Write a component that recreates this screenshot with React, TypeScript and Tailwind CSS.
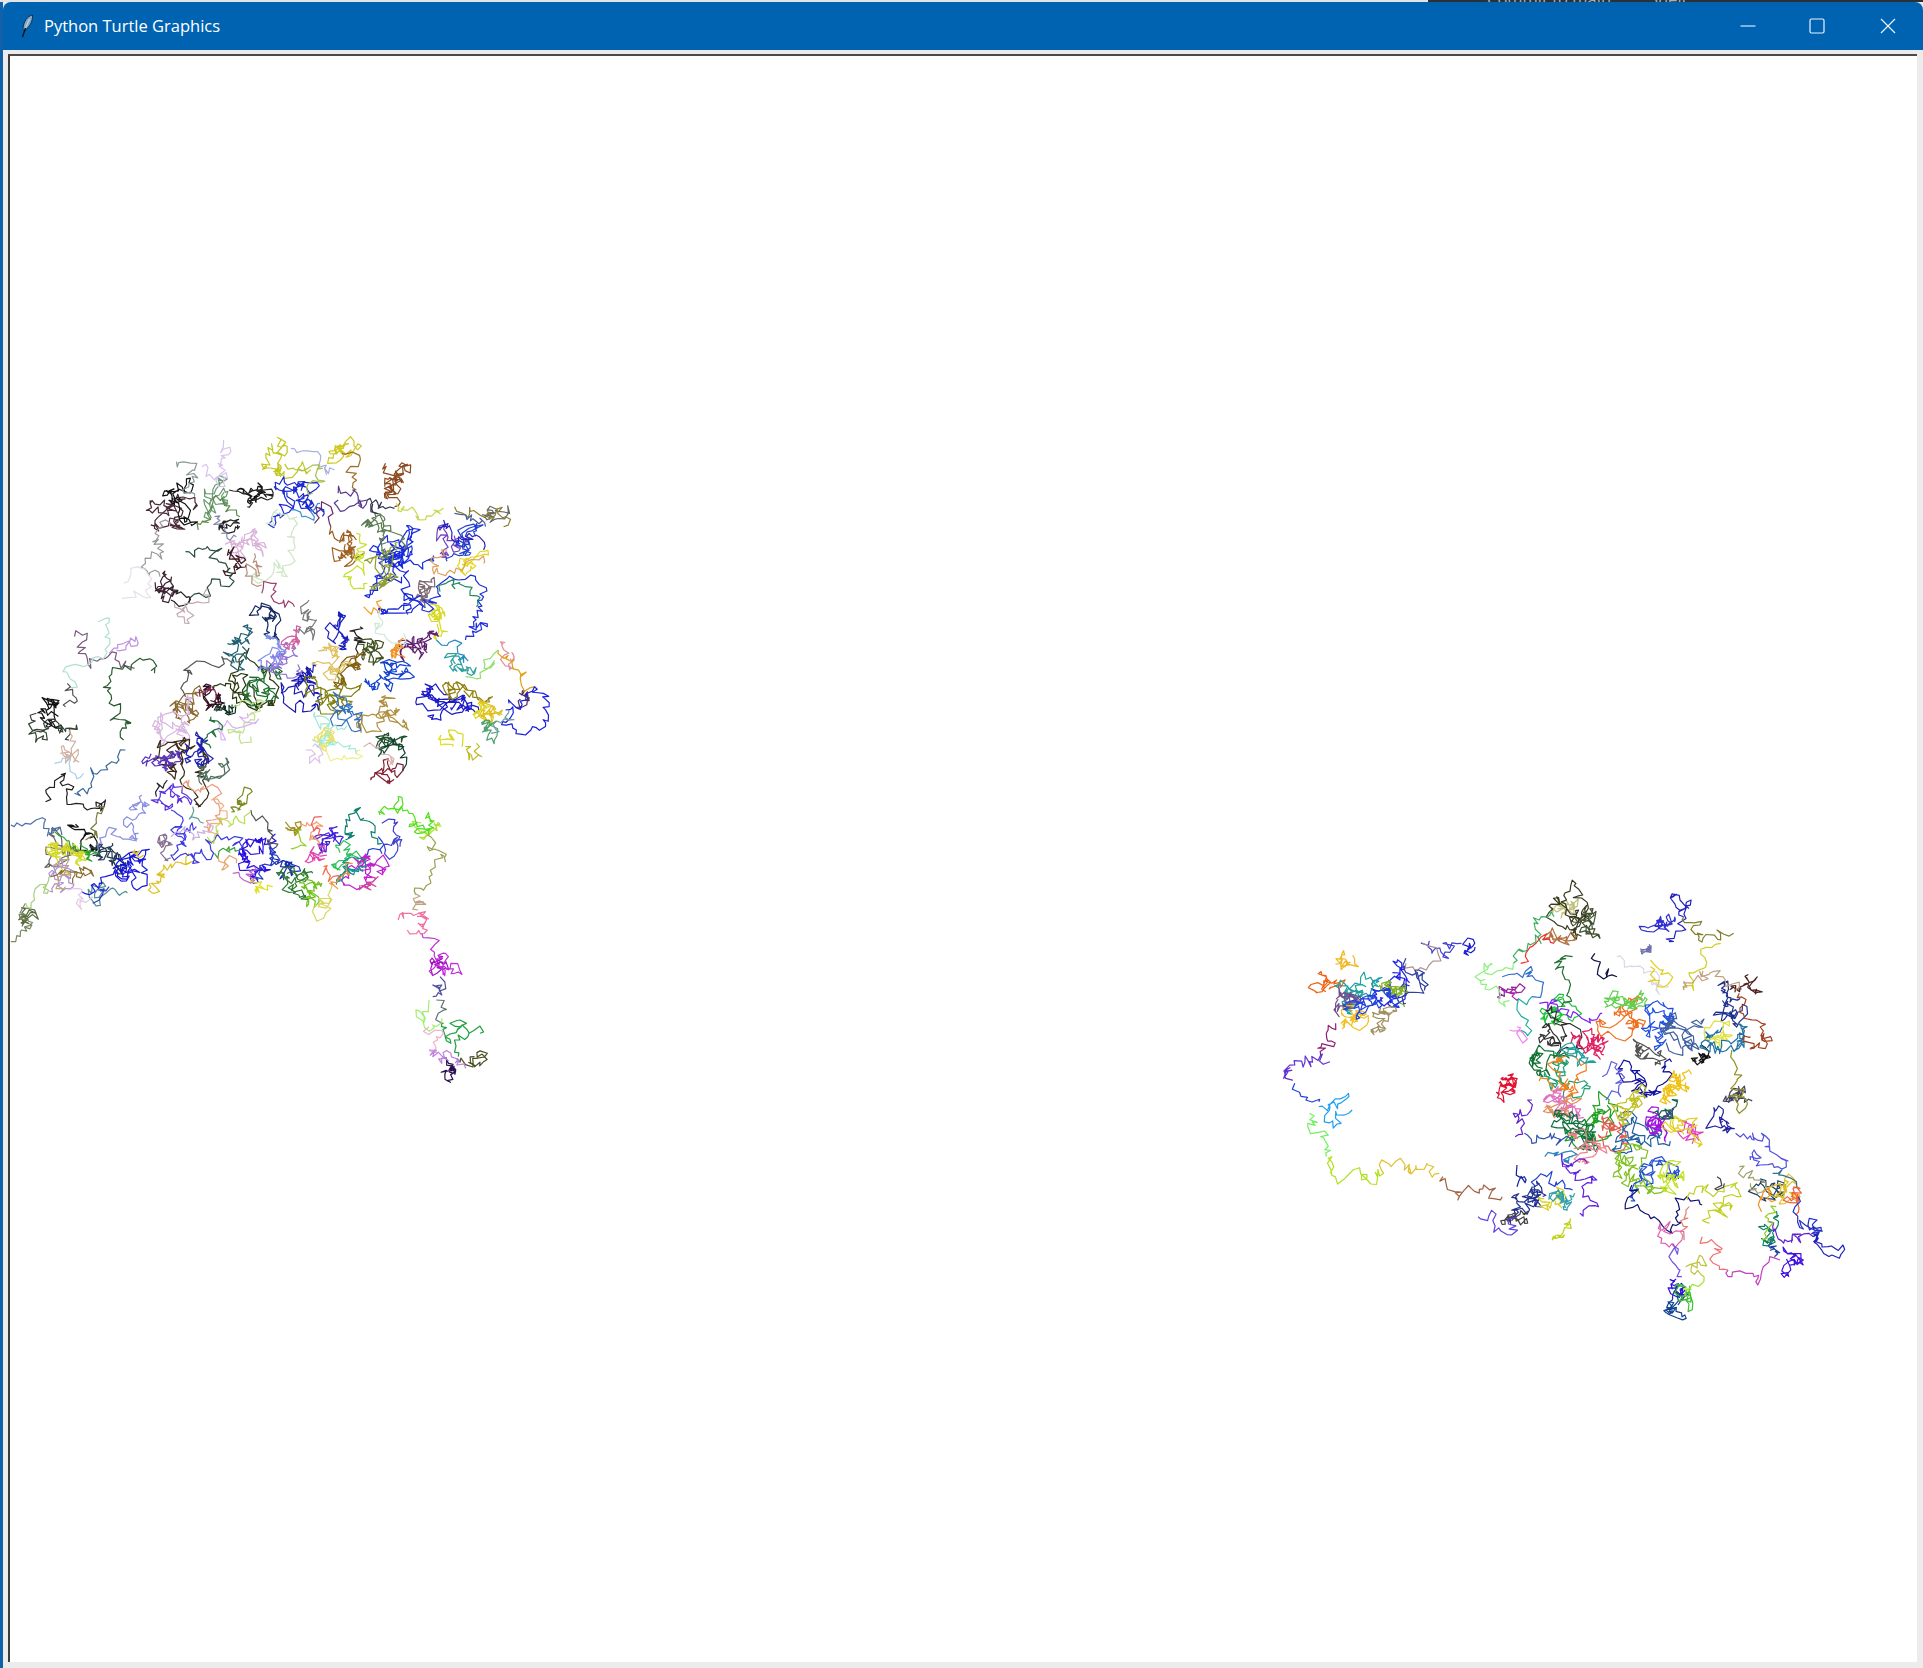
import { useMemo } from 'react';

type Trail = [string, ...number[]];
type Tangle = [string, number, number, number];

interface Group {
  ox: number;
  oy: number;
  sx: number;
  trails: Trail[];
  tangles: Tangle[];
}

// traced off the zoomed crops, relative to each group's origin
const groups: Group[] = [
  {
    ox: 0,
    oy: 420,
    sx: 2.75,
    trails: [
      ['#d9c3ee', 615, 60, 635, 95, 600, 130, 625, 175, 590, 180, 555, 140],
      ['#8a9a9a', 485, 125, 530, 150, 520, 190, 535, 230],
      ['#222222', 630, 210, 690, 205, 735, 240, 680, 260],
      ['#5d8a4a', 545, 330, 570, 280, 610, 235, 650, 270, 660, 290],
      ['#8888aa', 590, 290, 610, 340, 650, 350],
      ['#cfe6c8', 730, 310, 770, 290, 810, 320, 800, 350, 790, 470, 760, 420, 720, 460],
      ['#b89080', 700, 400, 720, 440, 680, 460, 720, 495],
      ['#999999', 470, 310, 420, 365, 440, 400, 400, 430, 440, 470],
      ['#2b4b40', 510, 395, 570, 380, 610, 385, 640, 460, 630, 500, 580, 490, 520, 550],
      ['#222222', 470, 510, 520, 530, 510, 555, 470, 540],
      ['#c0aab0', 480, 550, 510, 560, 490, 590, 520, 610, 530, 550, 570, 510],
      ['#e6e0ea', 335, 535, 400, 510, 380, 440, 340, 490],
      ['#aab0e0', 800, 85, 860, 95, 920, 150],
      ['#a8c050', 820, 145, 890, 185, 860, 220],
      ['#3a90d0', 800, 270, 830, 290, 880, 250],
      ['#a07030', 940, 100, 980, 160, 980, 210],
      ['#6a2a70', 865, 310, 910, 260, 910, 320],
      ['#9a5a20', 910, 320, 920, 355, 980, 360],
      ['#8a4a20', 1060, 130, 1110, 160, 1085, 260],
      ['#5a3a90', 930, 220, 970, 210, 1010, 240, 960, 260, 930, 240],
      ['#333355', 1010, 240, 1040, 265, 1085, 265],
      ['#c8d850', 1090, 250, 1150, 300, 1220, 265],
      ['#8a8030', 1250, 260, 1340, 275, 1390, 290, 1385, 320],
      ['#4a5a9a', 1250, 280, 1320, 295, 1335, 320],
      ['#2a20c0', 1220, 300, 1210, 330, 1290, 340, 1330, 390],
      ['#c8e030', 980, 340, 1000, 430, 945, 470, 1010, 490],
      ['#f0a020', 1000, 560, 1050, 540],
      ['#e0a060', 1230, 390, 1190, 450, 1250, 460, 1330, 430],
      ['#2030d8', 1110, 570, 1160, 570, 1200, 500, 1260, 480, 1330, 530, 1290, 620, 1340, 620, 1280, 660],
      ['#208a60', 1210, 515, 1260, 490, 1310, 560],
      ['#cfe8d8', 1040, 570, 1030, 610, 1110, 640],
      ['#a04070', 720, 520, 760, 490, 780, 540, 810, 560],
      ['#777777', 850, 540, 870, 600, 850, 620, 860, 660, 820, 640],
      ['#222222', 990, 620, 985, 700],
      ['#2a8ac0', 1200, 660, 1270, 670, 1260, 720],
      ['#e0a010', 1370, 690, 1410, 720, 1470, 800],
      ['#90e070', 1280, 770, 1330, 720, 1370, 690],
      ['#1a20e0', 1400, 850, 1470, 800, 1510, 860, 1460, 930, 1420, 930, 1390, 870],
      ['#70a0a0', 1350, 940, 1400, 870],
      ['#d8d820', 1210, 960, 1260, 940, 1270, 980],
      ['#555555', 640, 730, 610, 710, 505, 790, 510, 830],
      ['#802050', 550, 830, 580, 800, 590, 840],
      ['#c0e090', 640, 860, 720, 840, 700, 900, 630, 940, 690, 950],
      ['#d8b0f0', 600, 910, 620, 960, 680, 880],
      ['#207040', 580, 890, 570, 950, 580, 985],
      ['#7a5a7a', 205, 650, 240, 640, 215, 700, 250, 745, 290, 715, 370, 745],
      ['#c090e0', 300, 700, 340, 670, 380, 670, 320, 690],
      ['#b0e0d0', 270, 605, 300, 640, 270, 710, 230, 740, 190, 800],
      ['#555555', 185, 790, 205, 850, 180, 860],
      ['#334433', 100, 880, 100, 950, 130, 960, 120, 910, 210, 915, 190, 960],
      ['#2a5a30', 425, 760, 385, 715, 360, 750, 300, 770, 300, 850, 330, 880, 340, 960],
    ],
    tangles: [
      ['#4a2a38', 465, 265, 48],
      ['#111111', 490, 245, 32],
      ['#111111', 710, 225, 20],
      ['#222222', 640, 310, 24],
      ['#d8b0d8', 660, 370, 42],
      ['#3a1a20', 650, 425, 28],
      ['#3a2030', 450, 505, 32],
      ['#6a9a70', 600, 245, 18],
      ['#c0c820', 775, 125, 32],
      ['#d0c820', 940, 75, 26],
      ['#1a2ad0', 825, 220, 52],
      ['#a06020', 955, 390, 28],
      ['#8a4a20', 1085, 185, 32],
      ['#7040c0', 1240, 360, 30],
      ['#666666', 1345, 280, 12],
      ['#1a30e0', 1080, 420, 62],
      ['#5a7a50', 1070, 370, 42],
      ['#1525d8', 1080, 500, 52],
      ['#90a030', 1060, 450, 34],
      ['#2040d0', 1290, 370, 30],
      ['#e0d820', 1300, 425, 20],
      ['#d8d820', 1215, 605, 24],
      ['#7a6a70', 1170, 530, 24],
      ['#152a60', 745, 600, 30],
      ['#1a20c0', 945, 610, 30],
      ['#2a3a10', 700, 800, 52],
      ['#207030', 730, 800, 40],
      ['#1a1ab0', 850, 810, 48],
      ['#808010', 920, 800, 38],
      ['#806010', 980, 760, 24],
      ['#1040d0', 1060, 770, 44],
      ['#405020', 1030, 700, 24],
      ['#e0c060', 940, 720, 38],
      ['#9070d0', 790, 720, 44],
      ['#8090f0', 750, 700, 30],
      ['#206070', 660, 690, 34],
      ['#d060a0', 810, 670, 26],
      ['#602070', 1150, 680, 34],
      ['#f09020', 1100, 690, 24],
      ['#30a0a0', 1260, 740, 20],
      ['#1a1ac8', 1230, 860, 56],
      ['#908010', 1270, 820, 20],
      ['#e0d820', 1330, 870, 20],
      ['#b09040', 1050, 900, 36],
      ['#205030', 1060, 960, 28],
      ['#3070c0', 930, 880, 34],
      ['#a0e8d8', 880, 950, 30],
      ['#f0e060', 880, 960, 26],
      ['#8a6a30', 510, 860, 28],
      ['#301020', 590, 850, 22],
      ['#103020', 620, 865, 18],
      ['#d8b8e0', 470, 930, 46],
      ['#111111', 140, 875, 28],
      ['#e090a0', 1400, 720, 14],
      ['#503060', 1440, 830, 18],
      ['#e0c020', 1330, 870, 22],
      ['#50a070', 1345, 945, 18],
    ],
  },
  {
    ox: 0,
    oy: 740,
    sx: 2.75,
    trails: [
      ['#4a70a8', 30, 255, 70, 250, 120, 265, 170, 285],
      ['#7a8a60', 30, 605, 60, 570, 75, 540, 70, 490],
      ['#a8d080', 70, 490, 95, 480, 130, 460, 135, 410],
      ['#222222', 125, 185, 180, 100, 185, 160, 210, 190, 240, 210, 265, 205, 290, 180, 265, 200],
      ['#7a7a40', 265, 200, 265, 250, 235, 300],
      ['#3a6a9a', 205, 160, 250, 130, 280, 90, 320, 70, 345, 30],
      ['#a8d0e8', 150, 70, 190, 70, 230, 100],
      ['#8a7030', 140, 410, 210, 410, 250, 390, 200, 430],
      ['#c0a870', 140, 380, 180, 390, 180, 440],
      ['#1a1ae0', 225, 455, 280, 430, 340, 400, 395, 355, 405, 410, 390, 440, 350, 400],
      ['#3030d0', 255, 490, 270, 450, 300, 440],
      ['#e6c8e6', 185, 450, 210, 490, 250, 470],
      ['#8a90e0', 270, 330, 330, 290, 380, 280, 340, 240, 400, 220, 410, 195, 360, 210, 390, 165],
      ['#e0c020', 365, 340, 395, 345],
      ['#e0c020', 410, 430, 425, 460, 415, 430, 450, 375, 500, 370, 520, 340],
      ['#222222', 430, 170, 460, 120],
      ['#e8a080', 500, 150, 560, 140, 600, 190, 560, 260],
      ['#60a090', 530, 200, 560, 250],
      ['#f0b080', 580, 180, 610, 190, 600, 270],
      ['#4040e0', 470, 210, 470, 270, 540, 260],
      ['#3a3ae0', 480, 260, 490, 330, 470, 345, 510, 340, 530, 370, 550, 340, 580, 330, 590, 300, 660, 330],
      ['#c8b0e0', 470, 290, 530, 300, 570, 260],
      ['#555555', 690, 210, 730, 240, 735, 300, 760, 320],
      ['#b8e050', 690, 215, 670, 250, 620, 240, 600, 280, 570, 290],
      ['#40a040', 590, 340, 630, 320, 660, 330],
      ['#e8a060', 600, 350, 610, 390, 650, 370],
      ['#c060d0', 640, 400, 670, 420, 700, 380],
      ['#2a40c0', 710, 420, 770, 360, 760, 320],
      ['#2a7a30', 780, 400, 830, 420, 860, 400],
      ['#e0e020', 695, 415, 705, 460, 750, 440],
      ['#d8d860', 880, 480, 910, 475, 895, 520, 875, 500, 905, 460, 910, 430],
      ['#f0a070', 830, 260, 870, 245, 880, 310, 855, 290],
      ['#90d020', 830, 270, 820, 320, 800, 325],
      ['#f06060', 885, 230, 885, 290],
      ['#108070', 950, 300, 955, 260, 1000, 235, 1020, 275, 1050, 310],
      ['#2040d8', 1040, 290, 1050, 340, 1010, 345],
      ['#d040a0', 990, 435, 1020, 450, 1020, 410],
      ['#f09040', 905, 430, 950, 400, 970, 370],
      ['#f07050', 890, 380, 930, 420],
      ['#4040d0', 1050, 250, 1100, 290, 1060, 330, 1100, 320],
      ['#50e020', 1045, 225, 1095, 170, 1120, 210, 1125, 260, 1180, 285, 1150, 265, 1170, 235, 1190, 245],
      ['#9aa050', 1175, 285, 1175, 320, 1195, 360, 1180, 410, 1145, 465],
      ['#c0a080', 1140, 460, 1150, 510],
      ['#f070a0', 1095, 540, 1130, 520, 1170, 515, 1150, 550, 1175, 570, 1120, 570],
      ['#c030d8', 1160, 580, 1225, 640, 1240, 670, 1250, 700, 1210, 680, 1190, 705],
      ['#5050a0', 1210, 710, 1190, 735, 1215, 735, 1215, 765, 1190, 770],
      ['#607070', 1200, 780, 1205, 820, 1220, 850],
      ['#a0f070', 1180, 780, 1145, 830, 1190, 855, 1215, 835],
      ['#20a040', 1215, 850, 1240, 910, 1265, 840, 1290, 880, 1250, 900, 1260, 950],
      ['#20a040', 1290, 880, 1320, 880],
      ['#4a5020', 1255, 955, 1300, 955, 1340, 940, 1330, 965, 1305, 950],
      ['#f0b0d0', 1180, 860, 1200, 890, 1180, 930],
      ['#c080e0', 1180, 930, 1215, 970, 1240, 940, 1280, 985],
      ['#e0c0e8', 840, 30, 880, 70, 860, 20],
      ['#f0f080', 890, 10, 940, 60, 990, 30],
      ['#a0e8d8', 920, 10, 980, 40],
      ['#e0b0b0', 1000, 20, 1060, 60],
      ['#104030', 1040, 50, 1110, 30, 1110, 90],
      ['#e0e020', 1205, 0, 1245, 20],
      ['#c0b820', 1280, 20, 1290, 60, 1325, 50, 1310, 10],
    ],
    tangles: [
      ['#5a6a40', 70, 550, 12],
      ['#d0b0a0', 175, 35, 22],
      ['#111111', 230, 290, 26],
      ['#666666', 170, 320, 28],
      ['#223a50', 300, 370, 36],
      ['#d4d820', 190, 340, 30],
      ['#d4d820', 190, 340, 22],
      ['#1515d0', 345, 385, 30],
      ['#30a030', 230, 320, 18],
      ['#b090d0', 155, 425, 18],
      ['#509090', 290, 445, 12],
      ['#3a2a15', 510, 80, 50],
      ['#2020b0', 540, 30, 36],
      ['#5a30c0', 455, 70, 32],
      ['#507060', 570, 90, 24],
      ['#5a30e0', 460, 185, 22],
      ['#8a7090', 470, 300, 22],
      ['#7a8a20', 675, 180, 16],
      ['#2a10e0', 690, 345, 38],
      ['#1a30b0', 770, 385, 24],
      ['#2a7a30', 810, 420, 22],
      ['#70c020', 850, 465, 18],
      ['#a09020', 795, 255, 14],
      ['#4020e0', 915, 285, 28],
      ['#e040b0', 880, 340, 24],
      ['#30c060', 950, 330, 24],
      ['#c020d0', 1010, 380, 32],
      ['#109090', 970, 400, 22],
      ['#a010c0', 1210, 680, 18],
      ['#2a1050', 1240, 995, 20],
      ['#802030', 1075, 100, 26],
      ['#b0e040', 1165, 265, 14],
    ],
  },
  {
    ox: 1280,
    oy: 880,
    sx: 2.7,
    trails: [
      ['#4040d0', 490, 190, 440, 190, 455, 235, 410, 220, 385, 190],
      ['#b09090', 385, 190, 395, 270, 340, 250],
      ['#3040a0', 340, 235, 390, 330, 365, 270, 340, 370],
      ['#902070', 150, 430, 125, 460, 145, 500, 110, 525],
      ['#6030d0', 135, 545, 110, 525, 80, 545, 40, 555, 35, 600],
      ['#2040e0', 40, 610, 70, 660, 105, 665],
      ['#20a0f0', 105, 680, 185, 640, 135, 680, 165, 730, 195, 690],
      ['#70f060', 80, 700, 75, 740, 130, 800, 125, 830],
      ['#b0e020', 135, 880, 130, 835, 220, 900, 280, 880],
      ['#e0c030', 280, 880, 300, 860, 350, 880, 400, 855, 430, 880],
      ['#a06040', 440, 890, 480, 960, 550, 915, 600, 950],
      ['#6040e0', 535, 1010, 580, 1010, 625, 1065, 640, 1010],
      ['#1020a0', 640, 855, 660, 890, 640, 920],
      ['#2040d0', 690, 920, 720, 890, 790, 930],
      ['#6020e0', 810, 1000, 860, 980, 820, 930, 855, 900, 760, 820, 830, 850],
      ['#3080c0', 715, 830, 740, 820, 780, 850, 790, 830],
      ['#40b060', 740, 110, 700, 120, 670, 190, 630, 250],
      ['#90f080', 630, 250, 570, 250, 565, 330, 620, 360],
      ['#f03030', 650, 250, 680, 200, 740, 190],
      ['#3070d0', 600, 290, 640, 280, 690, 300, 680, 350],
      ['#20b0a0', 680, 350, 640, 390, 650, 450],
      ['#f080f0', 620, 450, 650, 480, 640, 440],
      ['#207030', 790, 230, 780, 300, 760, 380],
      ['#8020f0', 700, 370, 750, 380, 800, 400, 870, 400],
      ['#a04020', 1240, 340, 1300, 430, 1325, 470, 1305, 505, 1270, 470],
      ['#101040', 850, 220, 880, 280, 910, 290],
      ['#d8d8e8', 910, 230, 950, 260, 1000, 300, 1050, 320],
      ['#e0d020', 1000, 240, 1050, 280, 1020, 320, 1000, 260],
      ['#2020c0', 1050, 185, 1080, 60, 1110, 60, 1090, 110],
      ['#808030', 1090, 110, 1130, 180, 1190, 180, 1180, 150, 1225, 160],
      ['#d0d020', 1190, 190, 1130, 270, 1090, 330],
      ['#c0a080', 1090, 330, 1160, 280, 1230, 330],
      ['#909020', 1220, 510, 1235, 600, 1250, 640, 1240, 700, 1210, 650],
      ['#5050e0', 1230, 760, 1280, 780, 1300, 760, 1310, 800, 1345, 860, 1280, 810, 1270, 840],
      ['#6060e0', 870, 590, 910, 570, 920, 650, 880, 660],
      ['#6020d0', 680, 660, 630, 700, 660, 730, 635, 770],
      ['#3050b0', 660, 760, 680, 790, 730, 760, 780, 800],
      ['#101070', 950, 915, 985, 1000, 1075, 1005, 1090, 960, 1140, 975],
      ['#c0d020', 1100, 960, 1170, 950, 1200, 920, 1240, 940, 1215, 990, 1170, 970, 1160, 1030],
      ['#404040', 1180, 890, 1180, 930, 1200, 910],
      ['#e08070', 1105, 980, 1100, 1040, 1085, 1080],
      ['#e060b0', 1085, 1080, 1040, 1090, 1040, 1040, 1090, 1080],
      ['#7050e0', 1060, 1090, 1050, 1130, 1080, 1170, 1085, 1190],
      ['#f07070', 1140, 1070, 1190, 1110, 1170, 1150, 1210, 1170],
      ['#c040c0', 1210, 1170, 1220, 1190, 1280, 1190, 1290, 1215, 1305, 1160, 1350, 1140],
      ['#c0c040', 1095, 1160, 1140, 1130, 1110, 1165, 1145, 1190],
      ['#a0e030', 1145, 1190, 1100, 1250],
      ['#6020d0', 1320, 1025, 1400, 1080, 1440, 1070],
      ['#2020c0', 1440, 1070, 1490, 1125, 1520, 1095, 1480, 1100, 1440, 1065],
      ['#2040a0', 1330, 1090, 1335, 1130],
      ['#90d020', 1300, 1080, 1310, 1010, 1340, 980],
      ['#a0a070', 1240, 860, 1280, 900, 1290, 940, 1270, 910],
      ['#f09020', 1300, 995, 1340, 960],
      ['#2030c0', 1400, 950, 1450, 1020, 1430, 1050, 1450, 1070],
      ['#307090', 1330, 880, 1355, 870, 1395, 920],
    ],
    tangles: [
      ['#1a1ad8', 500, 205, 18],
      ['#f0b820', 195, 235, 26],
      ['#f06010', 145, 305, 22],
      ['#2020e0', 285, 300, 44],
      ['#80b020', 300, 320, 28],
      ['#20a0a0', 230, 350, 50],
      ['#705090', 170, 370, 28],
      ['#f0c020', 210, 415, 28],
      ['#a09060', 290, 420, 28],
      ['#2040e0', 260, 375, 38],
      ['#c0c080', 800, 80, 30],
      ['#3a3a20', 775, 105, 46],
      ['#405030', 840, 150, 28],
      ['#b07040', 750, 170, 22],
      ['#a020a0', 620, 340, 22],
      ['#20c040', 760, 400, 38],
      ['#303030', 740, 480, 36],
      ['#e02060', 830, 490, 38],
      ['#107030', 700, 550, 32],
      ['#e01030', 620, 585, 22],
      ['#20a070', 770, 590, 42],
      ['#f08020', 770, 590, 34],
      ['#20a0a0', 820, 520, 26],
      ['#e070c0', 770, 650, 36],
      ['#e09060', 740, 700, 22],
      ['#f07020', 920, 410, 36],
      ['#60d050', 970, 380, 42],
      ['#2050e0', 1040, 430, 46],
      ['#4060a0', 1070, 470, 36],
      ['#505050', 1010, 520, 32],
      ['#101010', 1130, 550, 22],
      ['#1010a0', 1000, 600, 44],
      ['#f0c010', 1070, 620, 28],
      ['#203090', 1220, 380, 36],
      ['#2070a0', 1200, 450, 44],
      ['#e0e040', 1180, 470, 24],
      ['#502020', 1260, 320, 22],
      ['#7070b0', 1000, 205, 12],
      ['#3030d0', 1060, 130, 22],
      ['#404060', 1225, 650, 22],
      ['#2020a0', 1205, 735, 20],
      ['#20a020', 850, 730, 46],
      ['#107040', 800, 760, 52],
      ['#f08090', 830, 790, 30],
      ['#e06050', 900, 760, 28],
      ['#2060a0', 980, 790, 44],
      ['#80c020', 970, 870, 50],
      ['#2050d0', 1000, 890, 36],
      ['#a010e0', 1060, 720, 36],
      ['#e040c0', 1100, 780, 22],
      ['#e0d020', 1095, 755, 20],
      ['#106050', 1015, 700, 14],
      ['#c0e020', 1060, 880, 28],
      ['#c0c020', 930, 680, 28],
      ['#203090', 660, 960, 36],
      ['#d8d020', 740, 960, 32],
      ['#30a0b0', 745, 965, 24],
      ['#404040', 650, 1010, 26],
      ['#c0d010', 770, 1040, 16],
      ['#3010e0', 1075, 1230, 24],
      ['#104090', 1075, 1280, 26],
      ['#40c030', 1090, 1250, 14],
      ['#4010e0', 1380, 1150, 22],
      ['#108060', 1340, 1050, 28],
      ['#204060', 1355, 925, 26],
      ['#e0c020', 1370, 935, 20],
      ['#f06040', 1385, 950, 10],
    ],
  },
];

function makeRandom(seed: number) {
  let a = seed;
  return () => {
    a = (a + 0x6d2b79f5) | 0;
    let t = Math.imul(a ^ (a >>> 15), 1 | a);
    t = (t + Math.imul(t ^ (t >>> 7), 61 | t)) ^ t;
    return ((t ^ (t >>> 14)) >>> 0) / 4294967296;
  };
}

function trailPath(t: Trail, g: Group, rnd: () => number) {
  const pt = (x: number, y: number) => `${(g.ox + x / g.sx).toFixed(1)} ${(g.oy + y / 3).toFixed(1)}`;
  const nums = t.slice(1) as number[];
  let x = nums[0];
  let y = nums[1];
  let d = `M${pt(x, y)}`;
  for (let i = 2; i < nums.length; i += 2) {
    const tx = nums[i];
    const ty = nums[i + 1];
    let guard = 0;
    while (Math.hypot(tx - x, ty - y) > 16 && guard++ < 60) {
      const a = Math.atan2(ty - y, tx - x) + (rnd() - 0.5) * 3.2;
      const len = 9 + rnd() * 14;
      x += Math.cos(a) * len;
      y += Math.sin(a) * len;
      d += `L${pt(x, y)}`;
    }
    x = tx;
    y = ty;
    d += `L${pt(x, y)}`;
  }
  return d;
}

// wanders between a few lobes around the centre, so it doesn't read as a round ball
function tanglePath(t: Tangle, g: Group, rnd: () => number) {
  const pt = (x: number, y: number) => `${(g.ox + x / g.sx).toFixed(1)} ${(g.oy + y / 3).toFixed(1)}`;
  const cx = t[1];
  const cy = t[2];
  const r = t[3] * 1.6;
  const lobes = 2 + Math.floor(t[3] / 9);
  let x = cx + (rnd() - 0.5) * r;
  let y = cy + (rnd() - 0.5) * r;
  let d = `M${pt(x, y)}`;
  for (let l = 0; l < lobes; l++) {
    const dir = rnd() * Math.PI * 2;
    const dist = r * Math.sqrt(rnd());
    const tx = cx + Math.cos(dir) * dist;
    const ty = cy + Math.sin(dir) * dist;
    let guard = 0;
    while (Math.hypot(tx - x, ty - y) > 14 && guard++ < 14) {
      const a = Math.atan2(ty - y, tx - x) + (rnd() - 0.5) * 3;
      const len = 10 + rnd() * 16;
      x += Math.cos(a) * len;
      y += Math.sin(a) * len;
      d += `L${pt(x, y)}`;
    }
    const knot = 3 + Math.floor(rnd() * 6);
    for (let i = 0; i < knot; i++) {
      const a = rnd() * Math.PI * 2;
      const len = 6 + rnd() * 12;
      x += Math.cos(a) * len;
      y += Math.sin(a) * len;
      d += `L${pt(x, y)}`;
    }
  }
  return d;
}

function TurtleDrawing() {
  const lines = useMemo(() => {
    const rnd = makeRandom(1923);
    const out: { c: string; d: string }[] = [];
    for (const g of groups) {
      for (const t of g.tangles) out.push({ c: t[0], d: tanglePath(t, g, rnd) });
      for (const t of g.trails) out.push({ c: t[0], d: trailPath(t, g, rnd) });
    }
    return out;
  }, []);

  return (
    <svg viewBox="10 56 1907 1606" className="block h-full w-full blur-[0.35px]" fill="none">
      {lines.map((l, i) => (
        <path key={i} d={l.d} stroke={l.c} strokeWidth={1.2} strokeLinejoin="round" />
      ))}
    </svg>
  );
}

function Feather() {
  return (
    <svg width="14" height="24" viewBox="0 0 14 24">
      <path d="M12.5 1 C7.5 2 3.5 7.5 3 14.5 L4.6 16.5 C9.5 13 13 7.5 12.5 1Z" fill="#7fa9cc" stroke="#12263a" strokeWidth="0.9" />
      <path d="M9.5 5 L5.5 14" stroke="#dce9f3" strokeWidth="0.8" />
      <path d="M5.5 14 L2.5 23" stroke="#08131c" strokeWidth="1.4" />
    </svg>
  );
}

export default function App() {
  return (
    <div className="flex h-[1668px] w-[1923px] flex-col overflow-hidden bg-[#ececec] font-['Open_Sans',sans-serif]">
      {/* sliver of the window behind */}
      <div className="flex h-[2px] shrink-0 overflow-hidden bg-[#e4e4e4]">
        <div className="ml-[1428px] flex h-[2px] flex-1 items-end gap-[38px] bg-[#2b3037] pl-[59px] text-[16.5px] leading-[14px] text-[#aab0b8]">
          <span className="-mb-[4px] whitespace-nowrap">Commit to main</span>
          <span className="-mb-[4px] whitespace-nowrap">Shell</span>
        </div>
      </div>

      <div className="flex flex-1 flex-col border-l-[3px] border-l-[#0f62a8]">
        <div className="flex h-[48px] shrink-0 items-center rounded-t-[8px] bg-[#0063b1] pl-[17px] text-white">
          <Feather />
          <span className="ml-[10px] text-[16.5px] leading-none">Python Turtle Graphics</span>
          <div className="ml-auto flex items-center pr-[27px]">
            <svg width="16" height="16" viewBox="0 0 16 16" stroke="#e8f4ff" strokeWidth="1.1" fill="none">
              <path d="M0.5 8 H15.5" />
            </svg>
            <svg width="16" height="16" viewBox="0 0 16 16" stroke="#e8f4ff" strokeWidth="1.2" fill="none" className="ml-[53px]">
              <rect x="1" y="1" width="14" height="14" rx="1.5" />
            </svg>
            <svg width="16" height="16" viewBox="0 0 16 16" stroke="#e8f4ff" strokeWidth="1.2" fill="none" className="ml-[55px]">
              <path d="M1 1 L15 15 M15 1 L1 15" />
            </svg>
          </div>
        </div>

        <div className="flex flex-1 flex-col pt-[4px] pb-[6px] pl-[5px] pr-[6px]">
          <div className="flex-1 border-t-[2px] border-l-[2px] border-t-[#4a4a4a] border-l-[#3c3c3c] bg-white">
            <TurtleDrawing />
          </div>
        </div>
      </div>
    </div>
  );
}
